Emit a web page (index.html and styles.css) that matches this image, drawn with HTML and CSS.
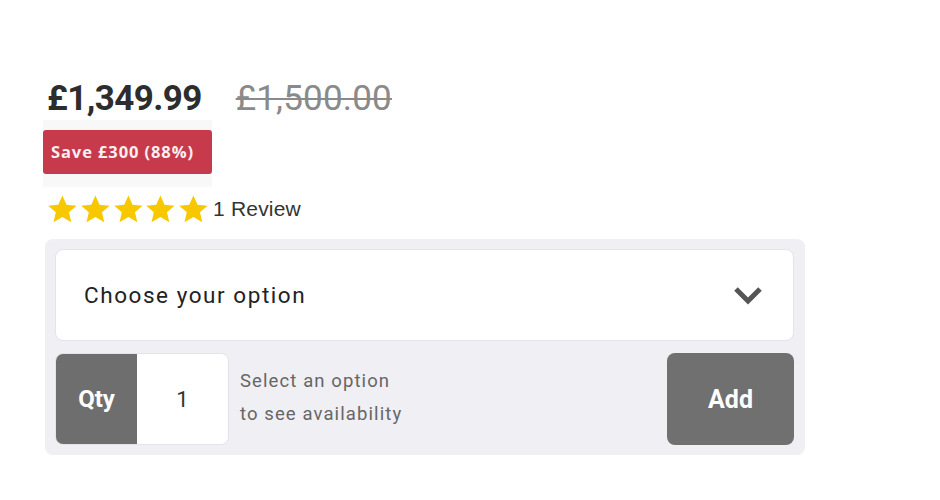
FILE: index.html
```html
<!DOCTYPE html>
<html>
<head>
<meta charset="utf-8">
<link rel="stylesheet" href="styles.css">
</head>
<body>
<div class="product">
  <div class="prices">
    <span class="price">£1,349.99</span>
    <span class="was">£1,500.00</span>
  </div>
  <div class="save-wrap"><span class="save">Save £300 (88%)</span></div>
  <div class="rating">
    <span class="stars">
      <svg viewBox="0 0 24 24" class="star"><path d="M12 1.2l3.2 7.2 7.8.7-5.9 5.1 1.8 7.6L12 17.8 5.1 21.8l1.8-7.6L1 9.1l7.8-.7z"/></svg>
      <svg viewBox="0 0 24 24" class="star"><path d="M12 1.2l3.2 7.2 7.8.7-5.9 5.1 1.8 7.6L12 17.8 5.1 21.8l1.8-7.6L1 9.1l7.8-.7z"/></svg>
      <svg viewBox="0 0 24 24" class="star"><path d="M12 1.2l3.2 7.2 7.8.7-5.9 5.1 1.8 7.6L12 17.8 5.1 21.8l1.8-7.6L1 9.1l7.8-.7z"/></svg>
      <svg viewBox="0 0 24 24" class="star"><path d="M12 1.2l3.2 7.2 7.8.7-5.9 5.1 1.8 7.6L12 17.8 5.1 21.8l1.8-7.6L1 9.1l7.8-.7z"/></svg>
      <svg viewBox="0 0 24 24" class="star"><path d="M12 1.2l3.2 7.2 7.8.7-5.9 5.1 1.8 7.6L12 17.8 5.1 21.8l1.8-7.6L1 9.1l7.8-.7z"/></svg>
    </span>
    <span class="reviews">1 Review</span>
  </div>
  <div class="buybox">
    <div class="select">
      <span class="select-label">Choose your option</span>
      <svg class="chevron" viewBox="0 0 30 20"><path d="M3 4l12 12L27 4" fill="none" stroke="#555" stroke-width="5"/></svg>
    </div>
    <div class="buyrow">
      <div class="qty">
        <span class="qty-label">Qty</span>
        <span class="qty-value">1</span>
      </div>
      <div class="avail">Select an option<br>to see availability</div>
      <button class="add">Add</button>
    </div>
  </div>
</div>
</body>
</html>
```
FILE: styles.css
```css
html, body { margin: 0; padding: 0; background: #fff; }
body { font-family: Roboto, "Noto Sans", sans-serif; color: #222; }
.product { padding: 78px 0 0 45px; width: 760px; }
.prices { display: flex; align-items: baseline; gap: 34px; padding-left: 2px; height: 42px; }
.price { font-size: 35px; font-weight: 700; color: #2d2d2d; letter-spacing: -0.6px; }
.was { font-size: 35px; font-weight: 400; color: #8a8a8a; text-decoration: line-through; text-decoration-thickness: 2px; letter-spacing: 0.2px; }
.save-wrap { width: 169px; margin-left: -2px; background: #f8f8f8; padding: 10px 0 13px; }
.save { display: block; background: #c63a4b; color: #fbeef0; font-family: "Open Sans", sans-serif; font-size: 16.5px; font-weight: 700; padding: 0 8px; height: 44px; line-height: 44px; border-radius: 3px; letter-spacing: 0.9px; white-space: nowrap; }
.rating { display: flex; align-items: center; margin-top: 8px; height: 28px; }
.stars { display: flex; margin-left: 1px; }
.star { width: 32.8px; height: 31px; fill: #f7c800; }
.reviews { font-family: "Liberation Sans", Arial, sans-serif; font-size: 21px; color: #333; margin-left: 3px; letter-spacing: 0.2px; }
.buybox { margin-top: 16px; background: #f0eff4; border-radius: 8px; padding: 10px 11px 10px 10px; }
.select { display: flex; align-items: center; justify-content: space-between; background: #fff; border: 1px solid #e3e3ea; border-radius: 8px; padding: 0 30px 0 28px; box-sizing: border-box; height: 92px; }
.select-label { font-size: 22.5px; color: #222; letter-spacing: 1.55px; }
.chevron { width: 30px; height: 20px; }
.buyrow { display: flex; align-items: stretch; margin-top: 12px; height: 92px; }
.qty { display: flex; width: 174px; border-radius: 8px; overflow: hidden; border: 1px solid #e3e3ea; box-sizing: border-box; }
.qty-label { width: 81px; background: #6e6e6e; color: #fff; font-weight: 700; font-size: 24px; display: flex; align-items: center; justify-content: center; }
.qty-value { flex: 1; background: #fff; display: flex; align-items: center; justify-content: center; font-size: 22px; color: #333; }
.avail { flex: 1; padding-left: 11px; font-size: 18.5px; line-height: 33px; color: #666; letter-spacing: 1.1px; display: flex; flex-direction: column; justify-content: center; padding-bottom: 2px; }
.add { width: 127px; background: #707070; color: #fff; border: none; border-radius: 8px; font-family: Roboto, sans-serif; font-weight: 700; font-size: 25px; padding: 0; }
```
